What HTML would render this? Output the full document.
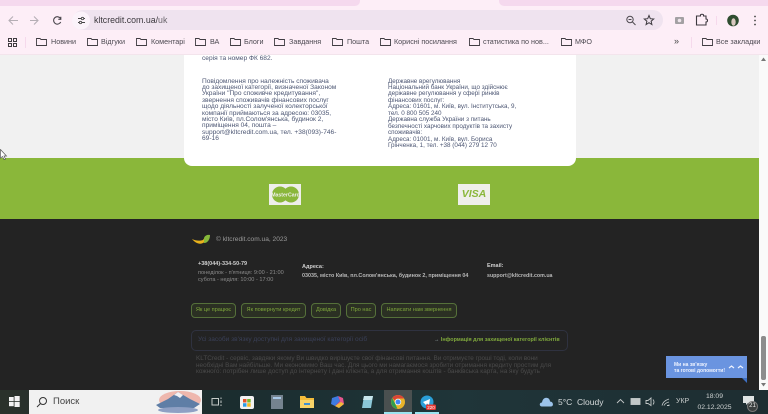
<!DOCTYPE html>
<html><head><meta charset="utf-8"><style>
html,body{margin:0;padding:0;width:768px;height:414px;overflow:hidden;background:#f1f1f1;font-family:"Liberation Sans",sans-serif}
.a{position:absolute}
.t{position:absolute;white-space:nowrap}
.bm{position:absolute;top:37px;font-size:7.2px;color:#4d4a52;white-space:nowrap;line-height:10px}
.f{position:absolute;top:38px;width:11px;height:8px}
.p{position:absolute;font-size:6.3px;line-height:6.45px;color:#4c5673;white-space:nowrap}
.btn{position:absolute;top:303px;height:13px;border:1px solid #55703a;border-radius:4px;background:#2b3023;color:#7fa83c;font-size:5.6px;line-height:13px;text-align:center;box-sizing:content-box}
</style></head><body>
<!-- chrome -->
<div class="a" style="left:0;top:0;width:768px;height:54px;background:#fdeef7"></div>
<div class="a" style="left:0;top:0;width:360px;height:6px;background:#f5d9ee;border-radius:0 0 5px 0"></div>
<div class="a" style="left:499px;top:0;width:269px;height:6px;background:#f5d9ee;border-radius:0 0 0 5px"></div>
<div class="a" style="left:0;top:54px;width:768px;height:1px;background:#f3e4ec"></div>
<div class="a" style="left:73px;top:10px;width:590px;height:20px;background:#efe3ef;border-radius:10px"></div>
<svg class="a" style="left:0;top:8px" width="100" height="24" viewBox="0 0 100 24" fill="none">
<path d="M18 12.500H9M13 8.500L9 12.500L13 16.500" stroke="#b5aeb5" stroke-width="1.100"/>
<path d="M30 12.500H38M34 8.500L38 12.500L34 16.500" stroke="#b5aeb5" stroke-width="1.100"/>
<path d="M60.500 10.500A3.700 3.700 0 1 0 60.700 14M60.800 8.800V11.300H58.300" stroke="#4a464c" stroke-width="1.100"/>
<circle cx="81" cy="12.500" r="9" fill="#fbf3fa"/>
<path d="M78 10.500H81M84 10.500H85M78 14.500H79M82 14.500H85" stroke="#444" stroke-width="1"/>
<circle cx="82.500" cy="10.500" r="1.200" stroke="#444" stroke-width=".8"/><circle cx="80.500" cy="14.500" r="1.200" stroke="#444" stroke-width=".8"/>
</svg>
<div class="t" style="left:94px;top:14px;font-size:8.8px;line-height:12px;color:#3c393e">kltcredit.com.ua/<span style="color:#6a666c">uk</span></div>
<svg class="a" style="left:620px;top:10px" width="148" height="22" viewBox="0 0 148 22" fill="none">
<circle cx="10" cy="9.500" r="3.200" stroke="#4d494f" stroke-width="1"/><path d="M12.500 12L15.500 15M8.500 9.500H11.500" stroke="#4d494f" stroke-width="1"/>
<path d="M29 5.500L30.300 8.700L33.700 9L31.100 11.200L31.900 14.500L29 12.700L26.100 14.500L26.900 11.200L24.300 9L27.700 8.700Z" stroke="#3e3a40" stroke-width="1"/>
<rect x="55" y="7" width="9" height="7" rx="1" fill="#a3a0a3"/><circle cx="59.500" cy="10.500" r="1.800" fill="#efe6ec"/>
<path d="M76.500 6H80.500V5C80.500 4 83.500 4 83.500 5V6H86V9C88 9 88 12 86 12V15H76.500Z" stroke="#3e3a40" stroke-width="1.100"/>
<rect x="96" y="6" width="1" height="9" fill="#f6d9ec"/>
<circle cx="113" cy="10.500" r="5.800" fill="#2f4d30"/><ellipse cx="113.500" cy="12" rx="2.200" ry="3.800" fill="#d9c8bf"/>
<circle cx="135" cy="6.500" r=".9" fill="#444"/><circle cx="135" cy="10.500" r=".9" fill="#444"/><circle cx="135" cy="14.500" r=".9" fill="#444"/>
</svg>
<!-- bookmarks -->
<svg class="a" style="left:7px;top:37px" width="20" height="12" viewBox="0 0 20 12" fill="none" stroke="#3f3c40" stroke-width="1"><rect x="1.500" y="1.500" width="3" height="3"/><rect x="6.500" y="1.500" width="3" height="3"/><rect x="1.500" y="6.500" width="3" height="3"/><rect x="6.500" y="6.500" width="3" height="3"/></svg>
<div class="a" style="left:25px;top:37px;width:1px;height:11px;background:#f5d9ec"></div>
<svg width="0" height="0" style="position:absolute"><defs><symbol id="fd" viewBox="0 0 11 8"><path d="M.500.500H4L5 1.500H10.500V7.500H.500Z" fill="none" stroke="#403c42" stroke-width=".9"/></symbol></defs></svg>
<svg class="f" style="left:36px"><use href="#fd"/></svg><div class="bm" style="left:51px">Новини</div>
<svg class="f" style="left:87px"><use href="#fd"/></svg><div class="bm" style="left:101px">Відгуки</div>
<svg class="f" style="left:136px"><use href="#fd"/></svg><div class="bm" style="left:151px">Коментарі</div>
<svg class="f" style="left:195px"><use href="#fd"/></svg><div class="bm" style="left:210px">ВА</div>
<svg class="f" style="left:230px"><use href="#fd"/></svg><div class="bm" style="left:244px">Блоги</div>
<svg class="f" style="left:274px"><use href="#fd"/></svg><div class="bm" style="left:289px">Завдання</div>
<svg class="f" style="left:332px"><use href="#fd"/></svg><div class="bm" style="left:347px">Пошта</div>
<svg class="f" style="left:380px"><use href="#fd"/></svg><div class="bm" style="left:394px">Корисні посилання</div>
<svg class="f" style="left:469px"><use href="#fd"/></svg><div class="bm" style="left:483px">статистика по нов...</div>
<svg class="f" style="left:561px"><use href="#fd"/></svg><div class="bm" style="left:575px">МФО</div>
<div class="t" style="left:674px;top:36px;font-size:9px;line-height:11px;color:#444">»</div>
<div class="a" style="left:691px;top:37px;width:1px;height:11px;background:#f5d9ec"></div>
<svg class="f" style="left:702px"><use href="#fd"/></svg><div class="bm" style="left:716px">Все закладки</div>
<!-- page -->
<div class="a" style="left:0;top:55px;width:759px;height:103px;background:#f1f1f1"></div>
<div class="a" style="left:0;top:158px;width:759px;height:61px;background:#8ab73a"></div>
<div class="a" style="left:184px;top:55px;width:392px;height:111px;background:#fff;border-radius:0 0 8px 8px"></div>
<div class="p" style="left:202px;top:55px;line-height:8px;font-size:6.6px">серія та номер ФК 682.</div>
<div class="p" style="left:202px;top:78.500px;font-size:6.6px;line-height:6.4px">Повідомлення про належність споживача<br>до захищеної категорії, визначеної Законом<br>України "Про споживче кредитування",<br>звернення споживачів фінансових послуг<br>щодо діяльності залученої колекторської<br>компанії приймаються за адресою: 03035,<br>місто Київ, пл.Солом'янська, будинок 2,<br>приміщення 04, пошта –<br>support@kltcredit.com.ua, тел. +38(093)-746-<br>69-16</div>
<div class="p" style="left:388px;top:78.500px">Державне врегулювання<br>Національний банк України, що здійснює<br>державне регулювання у сфері ринків<br>фінансових послуг:<br>Адреса: 01601, м. Київ, вул. Інститутська, 9,<br>тел. 0 800 505 240<br>Державна служба України з питань<br>безпечності харчових продуктів та захисту<br>споживачів:<br>Адреса: 01001, м. Київ, вул. Бориса<br>Грінченка, 1, тел. +38 (044) 279 12 70</div>
<!-- cursor -->
<svg class="a" style="left:0;top:149px" width="8" height="12" viewBox="0 0 8 12"><path d="M.500.500V9L2.500 7.500L4 10.500L5.500 10L4 7H6.500Z" fill="#fff" stroke="#555" stroke-width=".7"/></svg>
<!-- cards -->
<div class="a" style="left:269px;top:184px;width:32px;height:21px;background:#eeeeea"></div>
<svg class="a" style="left:269px;top:184px" width="32" height="21" viewBox="0 0 32 21"><circle cx="11" cy="10.500" r="8" fill="#8ab73a"/><circle cx="22" cy="10.500" r="8" fill="#8ab73a"/><text x="16.500" y="12.500" font-size="5.200" font-weight="700" fill="#eeeeea" text-anchor="middle" font-family="Liberation Sans">MasterCard</text></svg>
<div class="a" style="left:458px;top:184px;width:32px;height:21px;background:#efefeb;color:#8ab73a;font-size:10.500px;font-weight:700;font-style:italic;line-height:21px;text-align:center">VISA</div>
<!-- footer -->
<div class="a" style="left:0;top:219px;width:759px;height:171px;background:#232323"></div>
<svg class="a" style="left:191px;top:234px" width="20" height="13" viewBox="0 0 20 13"><path d="M1 5C5 7 9 7 12 6L14 3L13.500 8C10 11 5 10 1 5Z" fill="#e9b21c"/><path d="M13 4C14 1 17 0.500 19 1C19 5 17 9 13 9Z" fill="#86b83a"/></svg>
<div class="t" style="left:216px;top:236px;font-size:6.6px;line-height:8px;color:#9a9a9a">© kltcredit.com.ua, 2023</div>
<div class="t" style="left:198px;top:260px;font-size:5.500px;line-height:8px;color:#d0d0d0;font-weight:700">+38(044)-334-50-79</div>
<div class="t" style="left:198px;top:270px;font-size:5.600px;line-height:6.500px;color:#8c8c8c">понеділок - п'ятниця: 9:00 - 21:00<br>субота - неділя: 10:00 - 17:00</div>
<div class="t" style="left:302px;top:263px;font-size:5.500px;line-height:8px;color:#d0d0d0;font-weight:700">Адреса:</div>
<div class="t" style="left:302px;top:272px;font-size:5.400px;line-height:8px;color:#b8b8b8;font-weight:700">03035, місто Київ, пл.Солом'янська, будинок 2, приміщення 04</div>
<div class="t" style="left:487px;top:262px;font-size:5.500px;line-height:8px;color:#d0d0d0;font-weight:700">Email:</div>
<div class="t" style="left:487px;top:272px;font-size:5.300px;line-height:8px;color:#b8b8b8;font-weight:700">support@kltcredit.com.ua</div>
<div class="btn" style="left:191px;width:43px">Як це працює</div>
<div class="btn" style="left:241px;width:63px">Як повернути кредит</div>
<div class="btn" style="left:311px;width:28px">Довідка</div>
<div class="btn" style="left:346px;width:28px">Про нас</div>
<div class="btn" style="left:381px;width:74px">Написати нам звернення</div>
<div class="a" style="left:191px;top:330px;width:377px;height:21px;border:1px solid #2f3240;border-radius:5px;box-sizing:border-box"></div>
<div class="t" style="left:198px;top:336px;font-size:6.550px;line-height:8px;color:#3a4058">Усі засоби зв'язку доступні для захищеної категорії осіб</div>
<div class="t" style="left:434px;top:336px;font-size:5.400px;line-height:8px;color:#7fa83c;font-weight:700"><span style="color:#9aa">→</span> Інформація для захищеної категорії клієнтів</div>
<div class="t" style="left:196px;top:356px;font-size:6.400px;line-height:6.600px;color:#4a4a4a">KLTCredit - сервіс, завдяки якому Ви швидко вирішуєте свої фінансові питання. Ви отримуєте гроші тоді, коли вони<br>необхідні Вам найбільше. Ми економимо Ваш час. Для цього ми намагаємося зробити отримання кредиту простим для<br>кожного: потрібен лише доступ до інтернету і дані клієнта, а для отримання коштів - банківська карта, на яку будуть</div>
<!-- chat -->
<div class="a" style="left:666px;top:356px;width:81px;height:22px;background:#6a94e0"></div>
<svg class="a" style="left:742px;top:378px" width="5" height="5"><path d="M0 0H5V5Z" fill="#3e70c4"/></svg>
<div class="t" style="left:674px;top:362px;font-size:5px;line-height:6px;color:#eef3ff;font-weight:700">Ми на зв'язку<br>та готові допомогти!</div>
<svg class="a" style="left:728px;top:363px" width="18" height="8" viewBox="0 0 18 8" fill="none" stroke="#eef3ff" stroke-width="1.200"><path d="M1 5L3.500 3L6 5M10 5L12.500 3L15 5"/></svg>
<!-- scrollbar -->
<div class="a" style="left:759px;top:55px;width:9px;height:335px;background:#fafafa"></div>
<div class="a" style="left:761px;top:336px;width:5px;height:44px;background:#8c8c8c;border-radius:2px"></div>
<svg class="a" style="left:760px;top:383px" width="7" height="5"><path d="M1 0H6L3.500 3.500Z" fill="#777"/></svg>
<svg class="a" style="left:760px;top:57px" width="7" height="5"><path d="M1 4H6L3.500 .500Z" fill="#777"/></svg>
<!-- taskbar -->
<div class="a" style="left:0;top:390px;width:768px;height:24px;background:linear-gradient(90deg,#2a312b 0,#1b2d2f 30%,#1f3539 60%,#1e2d31 100%)"></div>
<svg class="a" style="left:9px;top:396px" width="11" height="11"><rect x="0" y="1" width="4.700" height="4.200" fill="#f2f2f2"/><rect x="5.500" y="0" width="5.200" height="5.200" fill="#f2f2f2"/><rect x="0" y="6" width="4.700" height="4.200" fill="#f2f2f2"/><rect x="5.500" y="6" width="5.200" height="5" fill="#f2f2f2"/></svg>
<div class="a" style="left:29px;top:390px;width:173px;height:24px;background:#f1f1f1"></div>
<svg class="a" style="left:36px;top:395px" width="12" height="14" viewBox="0 0 12 14" fill="none" stroke="#333" stroke-width="1"><circle cx="7" cy="6" r="3.500"/><path d="M4.500 8.500L1 12"/></svg>
<div class="t" style="left:53px;top:396px;font-size:9.500px;line-height:12px;color:#444">Поиск</div>
<svg class="a" style="left:154px;top:390px" width="48" height="24" viewBox="0 0 48 24"><ellipse cx="26" cy="10" rx="21" ry="9" fill="#eeb7ad"/><path d="M2 15L14 9L24 2L36 9L46 14L40 18H6Z" fill="#5f7ea6"/><path d="M20 5L24 2L29 5L26 8L23 6Z" fill="#f1f1f4"/><ellipse cx="24" cy="20" rx="20" ry="3" fill="#8fa0c4"/></svg>
<svg class="a" style="left:211px;top:396px" width="12" height="12" fill="none" stroke="#c6cbc9" stroke-width="1"><rect x="1" y="2.500" width="6.500" height="6.500"/><path d="M10 1.500V3M10 4.500V7M10 8.500V10"/></svg>
<div class="a" style="left:240px;top:396px;width:14px;height:13px;background:#f2f2f2;border-radius:2px"></div>
<svg class="a" style="left:243px;top:399px" width="8" height="8"><rect width="3.500" height="3.500" fill="#e8542c"/><rect x="4.200" width="3.500" height="3.500" fill="#7ab82c"/><rect y="4.200" width="3.500" height="3.500" fill="#2c9be8"/><rect x="4.200" y="4.200" width="3.500" height="3.500" fill="#f5b91f"/></svg>
<div class="a" style="left:271px;top:395px;width:12px;height:14px;background:#75838f"></div>
<div class="a" style="left:273px;top:397px;width:8px;height:2px;background:#a8c8e8"></div>
<svg class="a" style="left:300px;top:396px" width="14" height="12"><path d="M0 0H5L6.500 2H14V12H0Z" fill="#f2bc3a"/><rect x="0" y="4" width="14" height="8" fill="#f8d368"/><rect x="4" y="7" width="6" height="2" fill="#3f8fd4"/></svg>
<svg class="a" style="left:330px;top:395px" width="15" height="14"><path d="M2 3L8 1L10 6L5 11L1 9Z" fill="#3f7be0"/><path d="M8 1L13 3L14 9L9 13L5 11L10 6Z" fill="#e4568f"/><path d="M5 11L9 13L14 9L11 7Z" fill="#f0b93a"/></svg>
<svg class="a" style="left:361px;top:395px" width="13" height="14"><path d="M3 1H12L10 13H1Z" fill="#8cc8d8"/><path d="M3 1H12L11 5H2Z" fill="#c7e6ec"/></svg>
<div class="a" style="left:384px;top:390px;width:28px;height:24px;background:#4a5050"></div>
<div class="a" style="left:384px;top:412px;width:28px;height:2px;background:#9be4f0"></div>
<svg class="a" style="left:391px;top:395px" width="14" height="14" viewBox="0 0 14 14"><circle cx="7" cy="7" r="7" fill="#e9b32a"/><path d="M7 0A7 7 0 0 1 13.100 3.500H7A3.500 3.500 0 0 0 3.800 5.500L1.300 3A7 7 0 0 1 7 0Z" fill="#db4437"/><path d="M1.300 3L4 8.500L6.500 13.900A7 7 0 0 1 1.300 3Z" fill="#2f9e50"/><circle cx="7" cy="7" r="3.200" fill="#fff"/><circle cx="7" cy="7" r="2.500" fill="#4285f4"/></svg>
<div class="a" style="left:415px;top:412px;width:24px;height:2px;background:#9be4f0"></div>
<svg class="a" style="left:420px;top:395px" width="16" height="15" viewBox="0 0 16 15"><circle cx="7" cy="7" r="6.500" fill="#2a9fd8"/><path d="M3 7L10 4L9 10L7 8.500L6 10Z" fill="#fff"/><rect x="6" y="9.500" width="10" height="5.500" rx="1.500" fill="#e53935"/><text x="11" y="14" font-size="4.500" fill="#fff" text-anchor="middle" font-family="Liberation Sans">220</text></svg>
<svg class="a" style="left:539px;top:396px" width="15" height="11" viewBox="0 0 15 11"><path d="M3 10.500C0 10.500 0 6.500 3 6.500C3.500 3 6 1 8.500 2C10.500 2.500 11 4.500 11 5.500C14.500 5.500 15 10.500 12 10.500Z" fill="#9cc3ea"/></svg>
<div class="t" style="left:558px;top:396px;font-size:8.500px;line-height:12px;color:#d5dadb">5°C&nbsp; Cloudy</div>
<svg class="a" style="left:616px;top:396px" width="72" height="12" viewBox="0 0 72 12" fill="none" stroke="#c2c7c7" stroke-width=".9"><path d="M1 7L4.500 3.500L8 7"/><rect x="15" y="2.500" width="9" height="6" fill="#c2c7c7"/><path d="M30 4.500H32L35 2V9.500L32 7.500H30Z"/><path d="M37 3.500Q39 6 37 8.500"/><path d="M46 9.500Q47 5 53 3M48 9.500Q49 7 53 6M51 9.500H53V8.500"/></svg>
<div class="t" style="left:676px;top:397px;font-size:7px;line-height:10px;color:#c8cccc">УКР</div>
<div class="t" style="left:693px;top:391px;width:43px;text-align:center;font-size:6.800px;line-height:11px;color:#cfd3d3">18:09<br>02.12.2025</div>
<svg class="a" style="left:743px;top:396px" width="12" height="10" fill="#dfe3e3"><path d="M0 0H11V7H5L3 9V7H0Z"/></svg>
<div class="a" style="left:747px;top:401px;width:11px;height:11px;border-radius:50%;background:#3a3f3f;border:1px solid #777;box-sizing:border-box;color:#eee;font-size:6px;line-height:9px;text-align:center">21</div>
</body></html>
